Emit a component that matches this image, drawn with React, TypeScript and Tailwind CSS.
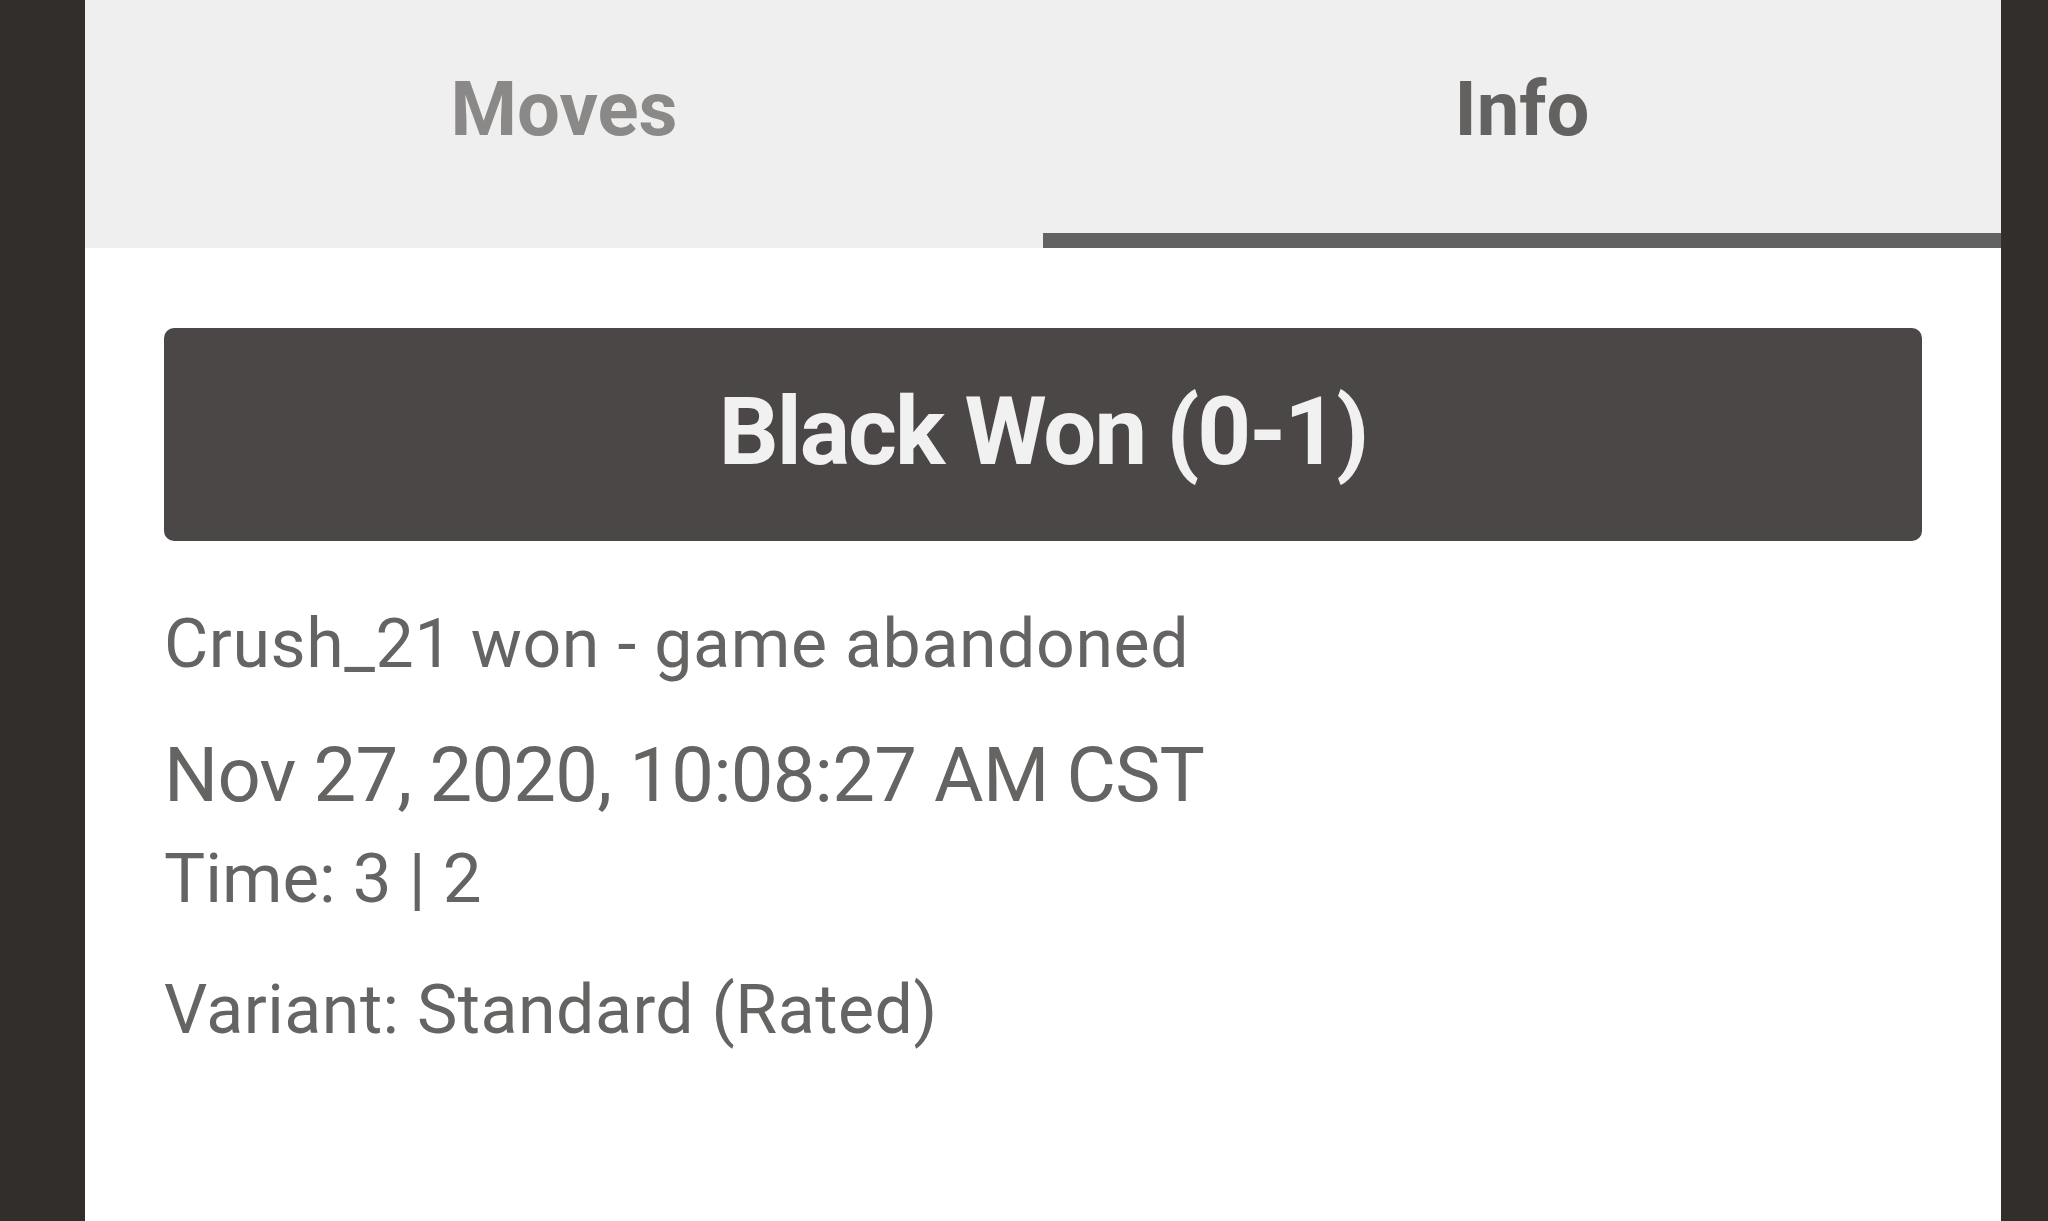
import React from "react";

const info = {
  result: "Black Won (0-1)",
  reason: "Crush_21 won - game abandoned",
  date: "Nov 27, 2020, 10:08:27 AM CST",
  time: "Time: 3 | 2",
  variant: "Variant: Standard (Rated)",
};

export default function App() {
  return (
    <div className="flex h-[1221px] w-full bg-[#322e2b] font-['Roboto',sans-serif]">
      <div className="w-[85px] shrink-0" />

      <div className="flex w-[1916px] flex-col bg-white">
        {/* Tabs */}
        <div className="flex h-[248px] bg-[#efefef]">
          <div className="flex flex-1 justify-center pt-[64px]">
            <span className="text-[76px] font-bold leading-[90px] text-[#8a8987]">
              Moves
            </span>
          </div>
          <div className="flex flex-1 justify-center border-b-[15px] border-[#636261] pt-[64px]">
            <span className="text-[76px] font-bold leading-[90px] text-[#636261]">
              Info
            </span>
          </div>
        </div>

        {/* Info panel */}
        <div className="flex flex-col px-[79px] pt-[80px] text-[#656463]">
          <div className="flex h-[213px] items-center justify-center rounded-[10px] bg-[#4b4746] pb-[5px]">
            <span className="text-[94px] font-bold leading-[112px] tracking-[-2px] text-[#f1f1f1]">
              {info.result}
            </span>
          </div>

          <p className="mt-[63px] text-[68px] leading-[80px] tracking-[0.6px]">{info.reason}</p>
          <p className="mt-[46px] text-[76px] leading-[91px] tracking-[-0.8px]">{info.date}</p>
          <p className="mt-[16px] text-[69px] leading-[83px]">{info.time}</p>
          <p className="mt-[49px] text-[68px] leading-[82px] tracking-[0.5px]">{info.variant}</p>
        </div>
      </div>

      <div className="flex-1" />
    </div>
  );
}
